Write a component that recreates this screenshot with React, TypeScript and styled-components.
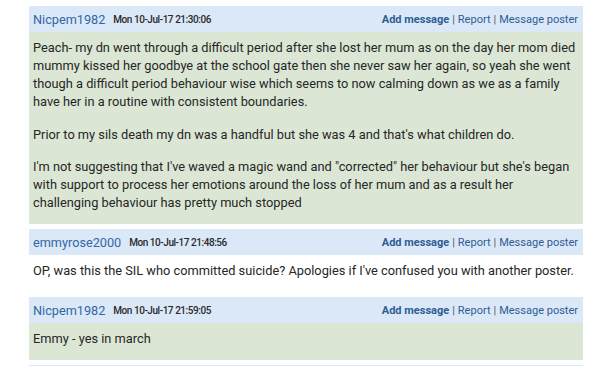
import React from "react";
import styled, { createGlobalStyle } from "styled-components";

const Global = createGlobalStyle`
  html, body { margin: 0; padding: 0; background: #ffffff; }
  body { font-family: Roboto, "Noto Sans", Arial, sans-serif; overflow: hidden; }
`;

const Thread = styled.div`
  width: 554px;
  margin: 6px 0 0 29px;
  display: flex;
  flex-direction: column;
  gap: 5px;
`;

const Post = styled.div`
  display: flex;
  flex-direction: column;
`;

const Header = styled.div`
  height: 26px;
  background: #dbe8f8;
  display: flex;
  align-items: center;
  padding: 0 5px 0 4px;
`;

const Name = styled.span`
  font-size: 12.7px;
  color: #3266a6;
  margin-right: 8px;
`;

const Date = styled.span`
  font-size: 10px;
  font-weight: 500;
  color: #2a2a2a;
  letter-spacing: -0.45px;
`;

const Links = styled.div`
  margin-left: auto;
  font-size: 11px;
  color: #2e5d94;
  display: flex;
  gap: 3px;
`;

const Link = styled.span<{ $bold?: boolean }>`
  font-weight: ${(p) => (p.$bold ? 700 : 400)};
  color: #2e5d94;
`;

const Sep = styled.span`
  color: #555;
`;

const Body = styled.div<{ $green?: boolean }>`
  background: ${(p) => (p.$green ? "#dce6d5" : "#ffffff")};
  padding: 7px 3px 12px 4px;
  font-size: 12.8px;
  line-height: 18px;
  color: #262626;
`;

const Para = styled.p`
  margin: 0 0 14.5px 0;
  &:last-child { margin-bottom: 0; }
`;

type PostData = { name: string; date: string; green: boolean; paras: string[] };

const posts: PostData[] = [
  {
    name: "Nicpem1982",
    date: "Mon 10-Jul-17 21:30:06",
    green: true,
    paras: [
      "Peach- my dn went through a difficult period after she lost her mum as on the day her mom died mummy kissed her goodbye at the school gate then she never saw her again, so yeah she went though a difficult period behaviour wise which seems to now calming down as we as a family have her in a routine with consistent boundaries.",
      "Prior to my sils death my dn was a handful but she was 4 and that's what children do.",
      "I'm not suggesting that I've waved a magic wand and \"corrected\" her behaviour but she's began with support to process her emotions around the loss of her mum and as a result her challenging behaviour has pretty much stopped",
    ],
  },
  {
    name: "emmyrose2000",
    date: "Mon 10-Jul-17 21:48:56",
    green: false,
    paras: ["OP, was this the SIL who committed suicide? Apologies if I've confused you with another poster."],
  },
  {
    name: "Nicpem1982",
    date: "Mon 10-Jul-17 21:59:05",
    green: true,
    paras: ["Emmy - yes in march"],
  },
  {
    name: "",
    date: "",
    green: false,
    paras: [""],
  },
];

export default function App() {
  return (
    <>
      <Global />
      <Thread>
        {posts.map((p, i) => (
          <Post key={i}>
            <Header>
              <Name>{p.name}</Name>
              <Date>{p.date}</Date>
              {p.name && (
                <Links>
                  <Link $bold>Add message</Link>
                  <Sep>|</Sep>
                  <Link>Report</Link>
                  <Sep>|</Sep>
                  <Link>Message poster</Link>
                </Links>
              )}
            </Header>
            <Body $green={p.green}>
              {p.paras.map((t, j) => (
                <Para key={j}>{t}</Para>
              ))}
            </Body>
          </Post>
        ))}
      </Thread>
    </>
  );
}
